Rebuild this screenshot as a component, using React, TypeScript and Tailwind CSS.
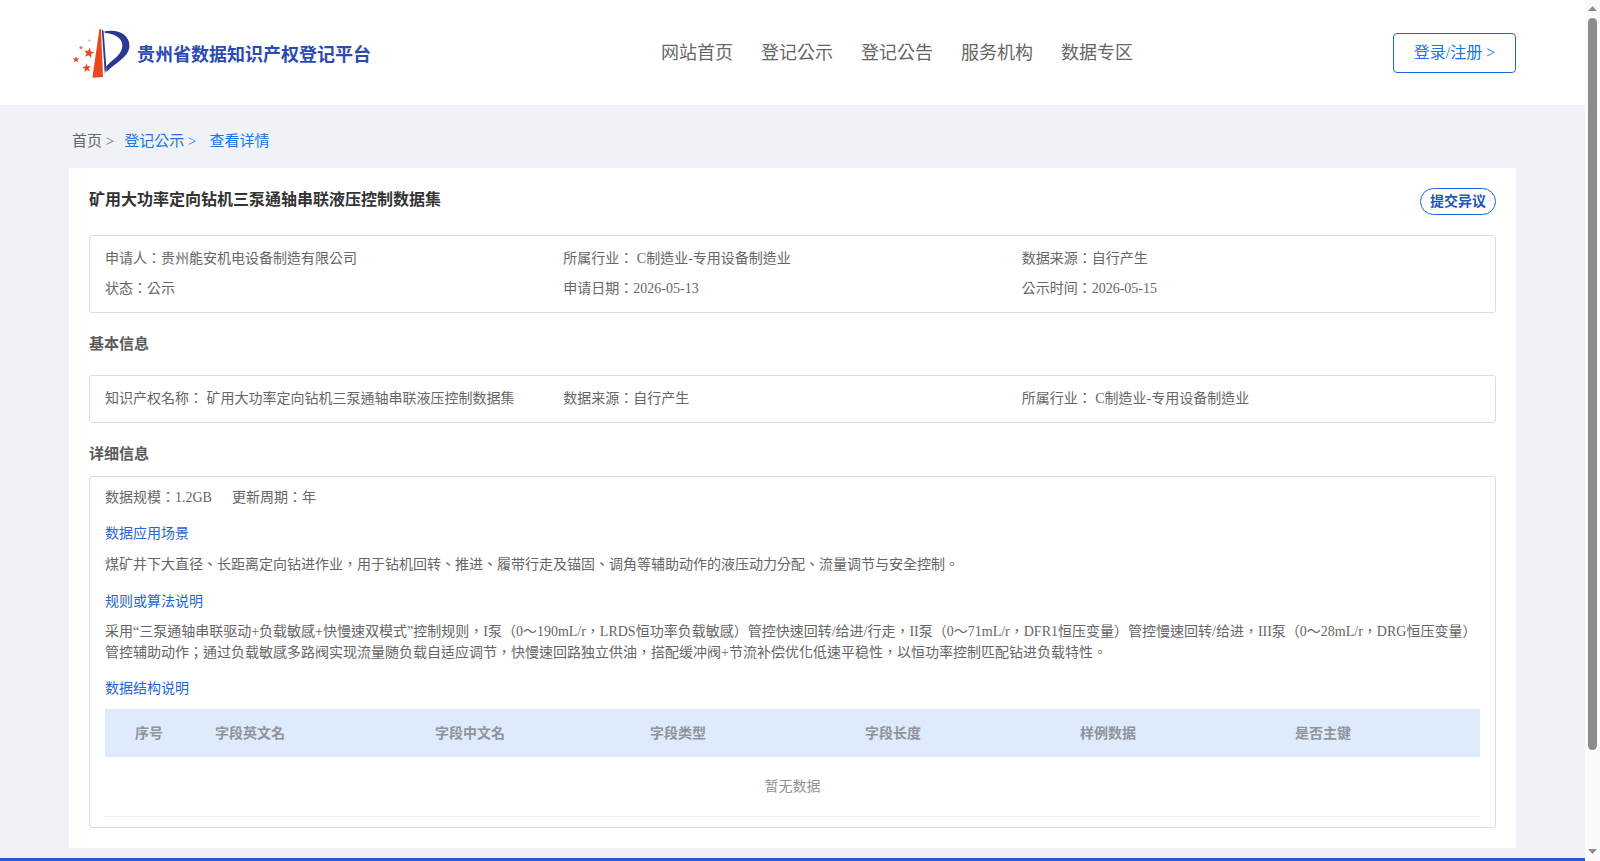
const F = "[font-family:'Liberation_Serif','Noto_Sans_CJK_TC',serif]";

function star(cx: number, cy: number, r: number, rot = 0) {
  const pts: string[] = [];
  for (let i = 0; i < 10; i++) {
    const rad = i % 2 === 0 ? r : r * 0.42;
    const a = (-90 + rot + i * 36) * (Math.PI / 180);
    pts.push(`${(cx + rad * Math.cos(a)).toFixed(2)},${(cy + rad * Math.sin(a)).toFixed(2)}`);
  }
  return pts.join(" ");
}

function Logo() {
  return (
    <svg width="60" height="50" viewBox="70 28 60 50" className="shrink-0">
      <path d="M99.4 29 L101 29 L103 77 L92.4 77.8 Z" fill="#e8481c" />
      <path d="M101.8 29.5 L103.6 31 L106.4 68 L104.8 74 Z" fill="#2a3a8f" />
      <path d="M104.6 31.2 C120 28.5 131 36 129.2 48 C127.6 58 116 62 106.4 72 L106.2 66.5 C112 59.5 122.4 55 122.4 45.5 C122.4 37.5 113.5 33.5 104.8 33 Z" fill="#2a3a8f" />
      <polygon points={star(89, 53, 5.5, 10)} fill="#e8481c" />
      <polygon points={star(76, 59.6, 3.6)} fill="#e8481c" />
      <polygon points={star(86.7, 68, 4.6, -8)} fill="#e8481c" />
      <circle cx="81" cy="47.6" r="1.6" fill="#ef7b55" />
      <circle cx="89.4" cy="40.6" r="1" fill="#ef9a7c" />
    </svg>
  );
}

function Row({ items }: { items: string[] }) {
  return (
    <div className="grid grid-cols-3">
      {items.map((t) => (
        <div key={t} className="text-[14px] leading-[30px] text-[#666]">{t}</div>
      ))}
    </div>
  );
}

const cols = ["序号", "字段英文名", "字段中文名", "字段类型", "字段长度", "样例数据", "是否主键"];
const colW = ["w-[110px] pl-[30px]", "w-[220px]", "w-[215px]", "w-[215px]", "w-[215px]", "w-[215px]", "w-[185px]"];

function Scrollbar() {
  return (
    <div className="w-[15px] shrink-0 bg-[#fafafa] flex flex-col items-center">
      <svg width="9" height="5" viewBox="0 0 9 5" className="mt-[6px]"><path d="M4.5 0 L9 5 L0 5 Z" fill="#8c8c8c" /></svg>
      <div className="mt-[7px] w-[9px] h-[732px] rounded-[5px] bg-[#8c8c8c]" />
      <svg width="9" height="5" viewBox="0 0 9 5" className="mt-auto mb-[7px]"><path d="M0 0 L9 0 L4.5 5 Z" fill="#8c8c8c" /></svg>
    </div>
  );
}

export default function App() {
  return (
    <div className={`${F} h-[861px] overflow-hidden flex bg-[#eff2f6]`}>
      <div className="flex-1 min-w-0 h-full overflow-hidden flex flex-col">
        <header className="h-[105px] shrink-0 bg-white flex items-center pl-[70px] pr-[69px]">
          <div className="flex items-center w-[591px]">
            <Logo />
            <span className="ml-[7px] mt-[6px] text-[18px] font-bold text-[#2b4bb3]">贵州省数据知识产权登记平台</span>
          </div>
          <nav className="flex gap-[28px] text-[18px] text-[#666] mt-[1px]">
            {["网站首页", "登记公示", "登记公告", "服务机构", "数据专区"].map((n) => (
              <span key={n}>{n}</span>
            ))}
          </nav>
          <button className="ml-auto w-[123px] h-[40px] pt-[1px] border border-[#1a66e0] rounded text-[16px] text-[#1a73e8]">登录/注册 &gt;</button>
        </header>
        <main className="px-[69px] shrink-0">
          <div className="h-[63px] flex items-center text-[15px] pt-[9px] pl-[3px]">
            <span className="text-[#666]">首页 &gt;</span>
            <span className="ml-[10px] text-[#1a73e8]">登记公示 &gt;</span>
            <span className="ml-[13px] text-[#1a73e8]">查看详情</span>
          </div>
          <div className="bg-white h-[680px] px-[20px] pt-[20px]">
            <div className="flex justify-between items-start">
              <h1 className="text-[16px] font-bold text-[#333] leading-[24px]">矿用大功率定向钻机三泵通轴串联液压控制数据集</h1>
              <button className="h-[27px] w-[76px] border border-[#1a66e0] rounded-[14px] text-[14px] font-bold text-[#1f55b5]">提交异议</button>
            </div>
            <div className="mt-[20px] border border-[#ddd] rounded-[3px] px-[15px] pt-[8px] pb-[8px]">
              <Row items={["申请人：贵州能安机电设备制造有限公司", "所属行业： C制造业-专用设备制造业", "数据来源：自行产生"]} />
              <Row items={["状态：公示", "申请日期：2026-05-13", "公示时间：2026-05-15"]} />
            </div>
            <h2 className="mt-[19px] text-[15px] font-bold text-[#5a5a5a] leading-[24px]">基本信息</h2>
            <div className="mt-[19px] border border-[#ddd] rounded-[3px] px-[15px] py-[8px]">
              <Row items={["知识产权名称： 矿用大功率定向钻机三泵通轴串联液压控制数据集", "数据来源：自行产生", "所属行业： C制造业-专用设备制造业"]} />
            </div>
            <h2 className="mt-[19px] text-[15px] font-bold text-[#5a5a5a] leading-[24px]">详细信息</h2>
            <div className="mt-[10px] border border-[#ddd] rounded-[3px] px-[15px] pt-[6px] h-[352px]">
              <div className="text-[14px] leading-[30px] text-[#666]">
                <span>数据规模：1.2GB</span>
                <span className="ml-[20px]">更新周期：年</span>
              </div>
              <div className="mt-[6px] text-[14px] leading-[30px] text-[#1f66d6]">数据应用场景</div>
              <p className="text-[14px] leading-[21px] mt-[5px] text-[#666]">煤矿井下大直径、长距离定向钻进作业，用于钻机回转、推进、履带行走及锚固、调角等辅助动作的液压动力分配、流量调节与安全控制。</p>
              <div className="mt-[12px] text-[14px] leading-[30px] text-[#1f66d6]">规则或算法说明</div>
              <p className="text-[14px] leading-[21px] mt-[4px] text-[#666]">采用“三泵通轴串联驱动+负载敏感+快慢速双模式”控制规则，I泵（0～190mL/r，LRDS恒功率负载敏感）管控快速回转/给进/行走，II泵（0～71mL/r，DFR1恒压变量）管控慢速回转/给进，III泵（0～28mL/r，DRG恒压变量）管控辅助动作；通过负载敏感多路阀实现流量随负载自适应调节，快慢速回路独立供油，搭配缓冲阀+节流补偿优化低速平稳性，以恒功率控制匹配钻进负载特性。</p>
              <div className="mt-[11px] text-[14px] leading-[30px] text-[#1f66d6]">数据结构说明</div>
              <div className="mt-[5px]">
                <div className="h-[48px] bg-[#deebfd] flex items-center text-[14px] font-bold text-[#909399]">
                  {cols.map((c, i) => (
                    <div key={c} className={colW[i]}>{c}</div>
                  ))}
                </div>
                <div className="h-[60px] border-b border-[#ebeef5] flex items-center justify-center text-[14px] text-[#909399]">暂无数据</div>
              </div>
            </div>
          </div>
        </main>
        <footer className="mt-[10px] h-[112px] shrink-0 bg-[#1f5fcf]" />
      </div>
      <Scrollbar />
    </div>
  );
}
